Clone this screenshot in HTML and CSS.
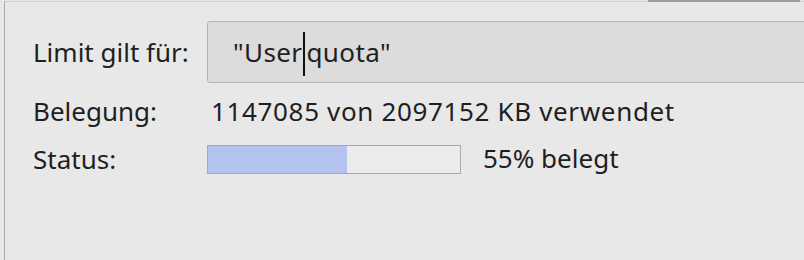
FILE: index.html
```html
<!DOCTYPE html>
<html lang="de">
<head>
  <meta charset="UTF-8" />
  <meta name="viewport" content="width=device-width, initial-scale=1.0"/>
  <title>Quota</title>
  <link rel="stylesheet" href="styles.css">
</head>
<body>

<div class="panel">
  <div class="panel-top">
    <div class="tab-edge"></div>
  </div>

  <div class="quota-form">
    <label class="field-label" for="limitTarget">Limit gilt für:</label>
    <div class="field-input" id="limitTarget">
      <span>"User</span><span class="caret"></span><span>quota"</span>
    </div>

    <div class="field-label">Belegung:</div>
    <div class="field-value">1147085 von 2097152 KB verwendet</div>

    <div class="field-label">Status:</div>
    <div class="status-row">
      <div class="progress">
        <div class="progress-fill" style="width: 55%"></div>
      </div>
      <span class="progress-text">55% belegt</span>
    </div>
  </div>
</div>

</body>
</html>
```

FILE: styles.css
```css
html, body {
  margin: 0;
  height: 100%;
  overflow: hidden;
}

body {
  background-color: #e8e8e8;
  color: #1f1f1f;
  font-family: 'Noto Sans', 'Open Sans', sans-serif;
  font-size: 26px;
}

.panel {
  margin-left: 4px;
  height: 100%;
  border-left: 1px solid #a9a9a9;
  border-top: 1px solid #cfcfcf;
  box-sizing: border-box;
  margin-top: 1px;
}

.panel-top {
  display: flex;
  justify-content: flex-end;
  height: 0;
}

.tab-edge {
  width: 152px;
  margin-right: 4px;
  margin-top: -2px;
  border-top: 2px solid #9e9e9e;
}

.quota-form {
  display: grid;
  grid-template-columns: 174px 600px;
  grid-template-rows: 62px 56px 40px;
  align-items: center;
  padding: 19px 0 0 28px;
}

.field-label {
  line-height: 34px;
}

.field-input {
  height: 62px;
  box-sizing: border-box;
  background-color: #dcdcdc;
  border: 1px solid #b3b3b3;
  border-radius: 3px;
  display: flex;
  align-items: center;
  padding-left: 25px;
  margin-right: -20px;
  letter-spacing: 0.4px;
}

.caret {
  width: 2px;
  height: 44px;
  background-color: #111;
  margin: 4px 1px 0 1px;
}

.field-value {
  padding-left: 4px;
  letter-spacing: 0.65px;
}

.status-row {
  display: flex;
  align-items: center;
  gap: 22px;
}

.progress {
  width: 254px;
  height: 29px;
  box-sizing: border-box;
  border: 1px solid #a9a9a9;
  background-color: #ebebeb;
}

.progress-text {
  margin-top: -2px;
}

.progress-fill {
  height: 100%;
  background-color: #b3c2ee;
}
```
